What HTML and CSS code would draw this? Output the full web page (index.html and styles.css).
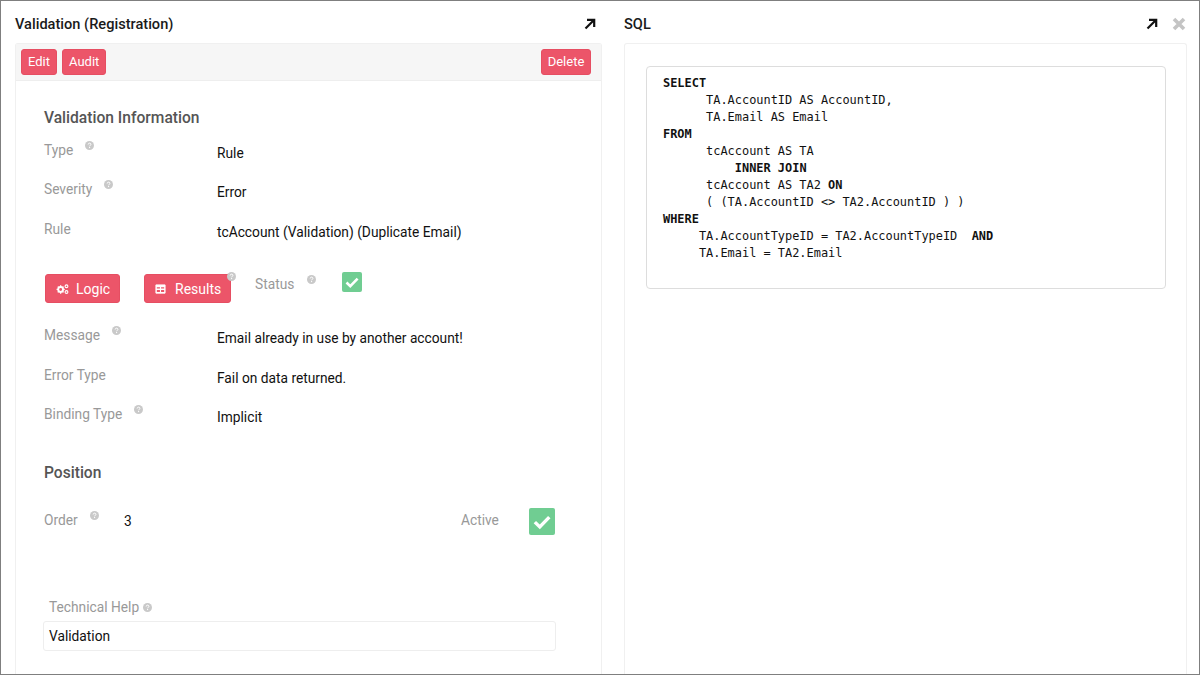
FILE: index.html
```html
<!DOCTYPE html>
<html lang="en">
<head>
<meta charset="utf-8">
<title>Validation (Registration)</title>
<link rel="stylesheet" href="styles.css">
</head>
<body>
<svg class="defs" width="0" height="0" aria-hidden="true">
  <symbol id="help" viewBox="0 0 10 10"><circle cx="5" cy="5" r="5" fill="#c9c9c9"/><path d="M3.5 3.9c0-.9.7-1.5 1.6-1.5s1.5.6 1.5 1.3c0 1.1-1.5 1.1-1.5 2.2" fill="none" stroke="#fff" stroke-width="1.1"/><rect x="4.5" y="6.7" width="1.2" height="1.2" fill="#fff"/></symbol>
  <symbol id="arrow" viewBox="0 0 12 12"><path d="M1.500 10.500 9.500 2.500M3 1.800h7.200V9" fill="none" stroke="#111" stroke-width="2.200"/></symbol>
  <symbol id="check" viewBox="0 0 20 20"><path d="M4.500 10.500 8.300 14.200 15.600 6.600" fill="none" stroke="#fff" stroke-width="2.600"/></symbol>
</svg>
<div class="window">
  <section class="pane pane-left">
    <header class="pane-head">
      <h2 class="pane-title">Validation (Registration)</h2>
      <svg class="arrow arrow-left"><use href="#arrow"/></svg>
    </header>
    <div class="card">
      <div class="toolbar">
        <button class="btn">Edit</button>
        <button class="btn">Audit</button>
        <button class="btn btn-end">Delete</button>
      </div>
      <div class="form">
        <h3 class="section-title">Validation Information</h3>
        <div class="row"><span class="label">Type<svg class="help"><use href="#help"/></svg></span><span class="value">Rule</span></div>
        <div class="row"><span class="label">Severity<svg class="help"><use href="#help"/></svg></span><span class="value">Error</span></div>
        <div class="row"><span class="label">Rule</span><span class="value">tcAccount (Validation) (Duplicate Email)</span></div>
        <div class="actions">
          <button class="btn btn-large btn-logic">
            <svg class="btn-icon" viewBox="0 0 14 12"><circle cx="5" cy="6.500" r="2.600" fill="none" stroke="#fff" stroke-width="2"/><path d="M5 2v2M5 9v2M.6 6.500h2M7.400 6.500h2M1.900 3.400l1.400 1.400M6.700 8.200l1.400 1.400M8.100 3.400 6.700 4.800M3.300 8.200 1.900 9.600" stroke="#fff" stroke-width="1.400"/><circle cx="11.300" cy="3" r="1.500" fill="none" stroke="#fff" stroke-width="1.200"/><circle cx="11.300" cy="9.200" r="1.500" fill="none" stroke="#fff" stroke-width="1.200"/></svg>
            Logic
          </button>
          <button class="btn btn-large btn-results">
            <svg class="btn-icon" viewBox="0 0 12 12"><path d="M1 1.500h10v9H1zM1 6h10M6 4v6.500" fill="#fff" stroke="#fff" stroke-width="1"/><path d="M2 4.200h3.400v1.200H2zM6.600 4.200H10v1.200H6.600zM2 7h3.400v2.400H2zM6.600 7H10v2.400H6.600z" fill="#ec5569"/></svg>
            Results
            <svg class="help help-badge"><use href="#help"/></svg>
          </button>
          <span class="label status-label">Status<svg class="help help-status"><use href="#help"/></svg></span>
          <span class="checkbox checkbox-small"><svg viewBox="0 0 20 20"><use href="#check"/></svg></span>
        </div>
        <div class="row"><span class="label">Message<svg class="help"><use href="#help"/></svg></span><span class="value">Email already in use by another account!</span></div>
        <div class="row"><span class="label">Error Type</span><span class="value">Fail on data returned.</span></div>
        <div class="row"><span class="label">Binding Type<svg class="help"><use href="#help"/></svg></span><span class="value">Implicit</span></div>
        <h3 class="section-title section-position">Position</h3>
        <div class="position-row">
          <span class="label order-label">Order<svg class="help"><use href="#help"/></svg></span>
          <span class="value order-value">3</span>
          <span class="label active-label">Active</span>
          <span class="checkbox checkbox-active"><svg viewBox="0 0 20 20"><use href="#check"/></svg></span>
        </div>
        <div class="field">
          <div class="field-label">Technical Help<svg class="help help-inline"><use href="#help"/></svg></div>
          <div class="input">Validation</div>
        </div>
      </div>
    </div>
  </section>
  <section class="pane pane-right">
    <header class="pane-head pane-head-right">
      <h2 class="pane-title">SQL</h2>
      <svg class="arrow"><use href="#arrow"/></svg>
      <svg class="close" viewBox="0 0 14 14"><path d="M2 2l10 10M12 2 2 12" stroke="#c4c4c4" stroke-width="3.600"/></svg>
    </header>
    <div class="card card-sql">
      <pre class="sql"><b>SELECT</b>
      TA.AccountID AS AccountID,
      TA.Email AS Email
<b>FROM</b>
      tcAccount AS TA
          <b>INNER JOIN</b>
      tcAccount AS TA2 <b>ON</b>
      ( (TA.AccountID &lt;&gt; TA2.AccountID ) )
<b>WHERE</b>
     TA.AccountTypeID = TA2.AccountTypeID  <b>AND</b>
     TA.Email = TA2.Email
</pre>
    </div>
  </section>
</div>
</body>
</html>
```

FILE: styles.css
```css
* { box-sizing: border-box; }
html, body { margin: 0; height: 100%; }
body { font-family: Roboto, "Liberation Sans", sans-serif; font-size: 13.75px; color: #111; background: #fff; overflow: hidden; }
.defs { position: absolute; }
.window { display: flex; width: 1200px; height: 675px; border: 1px solid #7f7f7f; overflow: hidden; background: #fff; }
.pane { display: flex; flex-direction: column; flex: none; }
.pane-left { width: 601px; padding-left: 14px; }
.pane-right { width: 597px; padding-left: 22px; }
.pane-head { display: flex; align-items: center; height: 42px; padding-top: 3px; flex: none; }
.pane-head-right { padding-right: 12px; }
.pane-title { margin: 0; font-size: 14.6px; font-weight: 500; color: #1a1a1a; flex: 1; }
.arrow { width: 12px; height: 12px; flex: none; }
.arrow-left { margin-right: 6px; }
.close { width: 14px; height: 14px; margin: 0 1px 0 14px; flex: none; }
.card { flex: 1; border: 1px solid #f0f0f0; border-bottom: 0; border-radius: 3px 3px 0 0; }
.card-sql { width: 563px; padding: 22px 21px 0; flex: 1; }
.toolbar { display: flex; gap: 5px; height: 37px; padding: 5px 10px 5px 5px; background: #f6f6f6; border-bottom: 1px solid #eee; }
.btn { font: 400 13px/24px Roboto, sans-serif; color: #fff; background: #ec5569; border: 1px solid #e64e62; border-radius: 3px; padding: 0 6px; height: 26px; }
.btn-end { margin-left: auto; width: 50px; padding: 0; }
.form { padding: 28px 0 0 28px; width: 540px; }
.section-title { margin: 0; font-size: 15.6px; font-weight: 500; line-height: 19px; color: #555; }
.row { display: flex; height: 39.300px; }
.form > .section-title + .row { margin-top: 13px; }
.label { color: #999; line-height: 18px; display: inline-flex; align-items: flex-start; }
.row .label { width: 173px; flex: none; }
.value { color: #111; line-height: 18px; padding-top: 3px; }
.help { width: 9px; height: 9px; margin: 0 0 0 12px; flex: none; }
.actions { display: flex; align-items: flex-start; height: 55px; margin: 12.600px 0 0 1px; position: relative; }
.btn-large { display: flex; align-items: center; font-size: 14px; height: 29px; margin-top: 3px; border-radius: 3px; padding: 0; position: relative; }
.btn-logic { width: 75px; padding-left: 10px; margin-right: 24px; }
.btn-results { width: 87px; padding-left: 10px; margin-right: 24px; }
.btn-icon { width: 13px; height: 12px; margin-right: 7px; flex: none; }
.btn-results .btn-icon { width: 11px; margin-right: 9px; }
.help-badge { position: absolute; top: -3px; right: -6px; margin: 0; }
.status-label { margin-top: 4px; width: 87px; }
.help-status { margin-left: 13px; }
.checkbox { display: block; width: 26px; height: 27px; background: #70cd92; border-radius: 2px; flex: none; }
.checkbox svg { display: block; width: 100%; height: 100%; }
.checkbox-small { width: 20px; height: 20px; margin-top: 1px; }
.checkbox-active { margin-top: 0; }
.section-position { margin-top: 19.200px; }
.position-row { display: flex; align-items: flex-start; margin-top: 25px; height: 91px; }
.order-label { width: 80px; margin-top: 3px; }
.order-value { padding-top: 4px; width: 337px; }
.active-label { width: 68px; margin-top: 3px; }
.field { margin-left: -1px; width: 513px; }
.field-label { color: #999; padding-left: 6px; line-height: 17px; }
.help-inline { margin: 0 0 0 4px; }
.input { height: 30px; margin-top: 5px; padding: 0 5px; line-height: 28px; border: 1px solid #eee; border-radius: 3px; color: #111; }
.sql { margin: 0; width: 520px; height: 223px; padding: 8px 16px; font: 11.93px/17px "DejaVu Sans Mono", "Liberation Mono", monospace; color: #111; border: 1px solid #ddd; border-radius: 4px; background: #fff; }
.sql b { font-weight: 700; }
```
